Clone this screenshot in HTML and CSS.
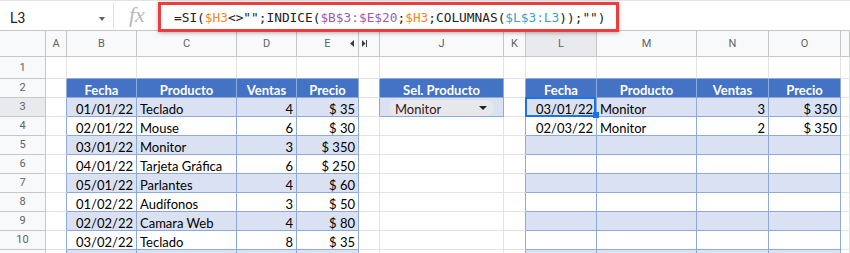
FILE: index.html
```html
<!DOCTYPE html>
<html lang="es">
<head>
<meta charset="utf-8">
<title>Hoja</title>
<link rel="stylesheet" href="styles.css">
</head>
<body>
<div class="app">
  <div class="fbar">
    <div class="namebox"><span class="nb-text">L3</span><span class="nb-caret"></span></div>
    <div class="sep"></div>
    <div class="fx">fx</div>
    <div class="formula">=SI(<span class="fo">$H3</span>&lt;&gt;"";INDICE(<span class="fp">$B$3:$E$20</span>;<span class="fo">$H3</span>;COLUMNAS(<span class="fb">$L$3:L3</span>));"")</div>
  </div>
  <div class="hl"></div>
  <div class="sheet">
    <!-- column headers -->
    <div class="c ch"></div>
    <div class="c ch">A</div>
    <div class="c ch">B</div>
    <div class="c ch">C</div>
    <div class="c ch">D</div>
    <div class="c ch pos">E<svg class="arr-l" width="4" height="7" viewBox="0 0 4 7"><path d="M4 0V7L0 3.5Z" fill="#3c4043"/></svg></div>
    <div class="c ch pos"><svg class="arr-r" width="5" height="7" viewBox="0 0 5 7"><path d="M0 0V7L3.5 3.5Z" fill="#3c4043"/><rect x="4" y="0" width="1" height="7" fill="#3c4043"/></svg></div>
    <div class="c ch">J</div>
    <div class="c ch">K</div>
    <div class="c ch x">L</div>
    <div class="c ch">M</div>
    <div class="c ch">N</div>
    <div class="c ch">O</div>
    <div class="c ch"></div>

    <!-- row 1 -->
    <div class="c rh">1</div>
    <div class="c"></div>
    <div class="c bb"></div>
    <div class="c bb"></div>
    <div class="c bb"></div>
    <div class="c bb"></div>
    <div class="c"></div>
    <div class="c bb"></div>
    <div class="c"></div>
    <div class="c bb"></div>
    <div class="c bb"></div>
    <div class="c bb"></div>
    <div class="c bb"></div>
    <div class="c"></div>

    <!-- row 2 -->
    <div class="c rh">2</div>
    <div class="c br"></div>
    <div class="c h">Fecha</div>
    <div class="c h">Producto</div>
    <div class="c h">Ventas</div>
    <div class="c h">Precio</div>
    <div class="c br"></div>
    <div class="c h">Sel. Producto</div>
    <div class="c br"></div>
    <div class="c h">Fecha</div>
    <div class="c h">Producto</div>
    <div class="c h">Ventas</div>
    <div class="c h">Precio</div>
    <div class="c"></div>

    <!-- row 3 -->
    <div class="c rh x">3</div>
    <div class="c br"></div>
    <div class="c s r">01/01/22</div>
    <div class="c s">Teclado</div>
    <div class="c s r">4</div>
    <div class="c s r">$ 35</div>
    <div class="c br"></div>
    <div class="c s"><div class="chip"><span>Monitor</span><span class="chip-tri"></span></div></div>
    <div class="c br"></div>
    <div class="c s r selcell">03/01/22<div class="selbox"></div><div class="handle"></div></div>
    <div class="c s">Monitor</div>
    <div class="c s r">3</div>
    <div class="c s r">$ 350</div>
    <div class="c"></div>

    <!-- row 4 -->
    <div class="c rh">4</div>
    <div class="c br"></div>
    <div class="c t r">02/01/22</div>
    <div class="c t">Mouse</div>
    <div class="c t r">6</div>
    <div class="c t r">$ 30</div>
    <div class="c"></div>
    <div class="c"></div>
    <div class="c br"></div>
    <div class="c t r">02/03/22</div>
    <div class="c t">Monitor</div>
    <div class="c t r">2</div>
    <div class="c t r">$ 350</div>
    <div class="c"></div>

    <!-- row 5 -->
    <div class="c rh">5</div>
    <div class="c br"></div>
    <div class="c s r">03/01/22</div>
    <div class="c s">Monitor</div>
    <div class="c s r">3</div>
    <div class="c s r">$ 350</div>
    <div class="c"></div>
    <div class="c"></div>
    <div class="c br"></div>
    <div class="c s"></div>
    <div class="c s"></div>
    <div class="c s"></div>
    <div class="c s"></div>
    <div class="c"></div>

    <!-- row 6 -->
    <div class="c rh">6</div>
    <div class="c br"></div>
    <div class="c t r">04/01/22</div>
    <div class="c t">Tarjeta Gráfica</div>
    <div class="c t r">6</div>
    <div class="c t r">$ 250</div>
    <div class="c"></div>
    <div class="c"></div>
    <div class="c br"></div>
    <div class="c t"></div>
    <div class="c t"></div>
    <div class="c t"></div>
    <div class="c t"></div>
    <div class="c"></div>

    <!-- row 7 -->
    <div class="c rh">7</div>
    <div class="c br"></div>
    <div class="c s r">05/01/22</div>
    <div class="c s">Parlantes</div>
    <div class="c s r">4</div>
    <div class="c s r">$ 60</div>
    <div class="c"></div>
    <div class="c"></div>
    <div class="c br"></div>
    <div class="c s"></div>
    <div class="c s"></div>
    <div class="c s"></div>
    <div class="c s"></div>
    <div class="c"></div>

    <!-- row 8 -->
    <div class="c rh">8</div>
    <div class="c br"></div>
    <div class="c t r">01/02/22</div>
    <div class="c t">Audífonos</div>
    <div class="c t r">3</div>
    <div class="c t r">$ 50</div>
    <div class="c"></div>
    <div class="c"></div>
    <div class="c br"></div>
    <div class="c t"></div>
    <div class="c t"></div>
    <div class="c t"></div>
    <div class="c t"></div>
    <div class="c"></div>

    <!-- row 9 -->
    <div class="c rh">9</div>
    <div class="c br"></div>
    <div class="c s r">02/02/22</div>
    <div class="c s">Camara Web</div>
    <div class="c s r">4</div>
    <div class="c s r">$ 80</div>
    <div class="c"></div>
    <div class="c"></div>
    <div class="c br"></div>
    <div class="c s"></div>
    <div class="c s"></div>
    <div class="c s"></div>
    <div class="c s"></div>
    <div class="c"></div>

    <!-- row 10 -->
    <div class="c rh">10</div>
    <div class="c br"></div>
    <div class="c t r">03/02/22</div>
    <div class="c t">Teclado</div>
    <div class="c t r">8</div>
    <div class="c t r">$ 35</div>
    <div class="c"></div>
    <div class="c"></div>
    <div class="c br"></div>
    <div class="c t"></div>
    <div class="c t"></div>
    <div class="c t"></div>
    <div class="c t"></div>
    <div class="c"></div>

    <!-- row 11 (only its top edge is visible) -->
    <div class="c rh"></div>
    <div class="c br"></div>
    <div class="c s"></div>
    <div class="c s"></div>
    <div class="c s"></div>
    <div class="c s"></div>
    <div class="c"></div>
    <div class="c"></div>
    <div class="c br"></div>
    <div class="c s"></div>
    <div class="c s"></div>
    <div class="c s"></div>
    <div class="c s"></div>
    <div class="c"></div>
  </div>
</div>
</body>
</html>
```
FILE: styles.css
```css
* { box-sizing: border-box; }
html, body { margin: 0; padding: 0; background: #fff; overflow: hidden; }
body { width: 850px; height: 253px; }

.app { position: relative; width: 850px; height: 253px; overflow: hidden; }

/* formula bar */
.fbar {
  display: flex;
  align-items: flex-start;
  height: 31px;
  border-top: 1px solid #e3e3e3;
  border-bottom: 1px solid #c7c7c7;
  background: #fff;
}
.namebox {
  display: flex;
  align-items: flex-start;
  width: 113px;
  padding-left: 10px;
  padding-right: 8px;
}
.nb-text {
  font-family: Roboto, "Liberation Sans", sans-serif;
  font-size: 14px;
  line-height: 16px;
  color: #202124;
  margin-top: 9px;
}
.nb-caret {
  margin-left: auto;
  margin-top: 16px;
  width: 0;
  height: 0;
  border-left: 3.5px solid transparent;
  border-right: 3.5px solid transparent;
  border-top: 4px solid #5f6368;
}
.sep { width: 1px; height: 26px; margin-top: 2px; background: #e0e0e0; }
.fx {
  width: 44px;
  padding-left: 15px;
  margin-top: 3px;
  font-family: "Liberation Serif", serif;
  font-style: italic;
  font-size: 22px;
  line-height: 22px;
  color: #b8b8b8;
}
.formula {
  padding-left: 16px;
  margin-top: 9px;
  font-family: "DejaVu Sans Mono", monospace;
  font-size: 12.8px;
  line-height: 16px;
  color: #222;
  white-space: nowrap;
}
.fo { color: #f0882e; }
.fp { color: #9a5cb4; }
.fb { color: #3a9fd2; }

.hl {
  position: absolute;
  left: 158px;
  top: 2px;
  width: 461px;
  height: 30px;
  border: 3px solid #ee3b3f;
  box-shadow: 0 1px 4px rgba(0, 0, 0, 0.3);
  z-index: 5;
}

/* sheet */
.sheet {
  display: grid;
  grid-template-columns: 46px 21px 70px 100px 60px 62px 21px 124px 22px 71px 100px 72px 72px 1fr;
  grid-template-rows: 26px 22px repeat(10, 19px);
}
.c {
  display: flex;
  align-items: flex-end;
  padding: 0 3px;
  border-right: 1px solid #e2e3e3;
  border-bottom: 1px solid #e2e3e3;
  background: #fff;
  font-family: Lato, "Liberation Sans", sans-serif;
  font-size: 13px;
  line-height: 13px;
  color: #000;
  white-space: nowrap;
  overflow: hidden;
}
.ch, .rh {
  background: #f8f9fa;
  border-color: #c4c7c5;
  justify-content: center;
  align-items: center;
  font-family: Roboto, "Liberation Sans", sans-serif;
  font-size: 11px;
  line-height: 12px;
  color: #5f6368;
}
.x { background: #e8eaed; }
.pos { position: relative; }
.arr-l { position: absolute; right: 4px; top: 9px; }
.arr-r { position: absolute; left: 3px; top: 9px; }

.r { justify-content: flex-end; }
.h {
  background: #4472c4;
  color: #fff;
  font-weight: 700;
  justify-content: center;
  border-color: #8eaadb;
}
.t { border-color: #8eaadb; }
.s { background: #d9e1f2; border-color: #8eaadb; }
.br { border-right-color: #8eaadb; }
.bb { border-bottom-color: #8eaadb; }

/* dropdown chip */
.chip {
  display: flex;
  align-items: flex-end;
  width: 105px;
  height: 16px;
  margin-left: 6px;
  padding: 0 7px 0 6px;
  border-radius: 8px;
  background: #e6e8ec;
  color: #3a1414;
}
.chip-tri {
  margin-left: auto;
  margin-bottom: 6px;
  width: 0;
  height: 0;
  border-left: 4px solid transparent;
  border-right: 4px solid transparent;
  border-top: 4px solid #202124;
}

/* selection */
.selcell { position: relative; overflow: visible; }
.selbox {
  position: absolute;
  left: -1px;
  top: -1px;
  right: 0;
  bottom: -1px;
  border: 2px solid #1a73e8;
}
.handle {
  position: absolute;
  left: 67px;
  top: 14px;
  width: 6px;
  height: 6px;
  background: #1a73e8;
  z-index: 2;
}
```
